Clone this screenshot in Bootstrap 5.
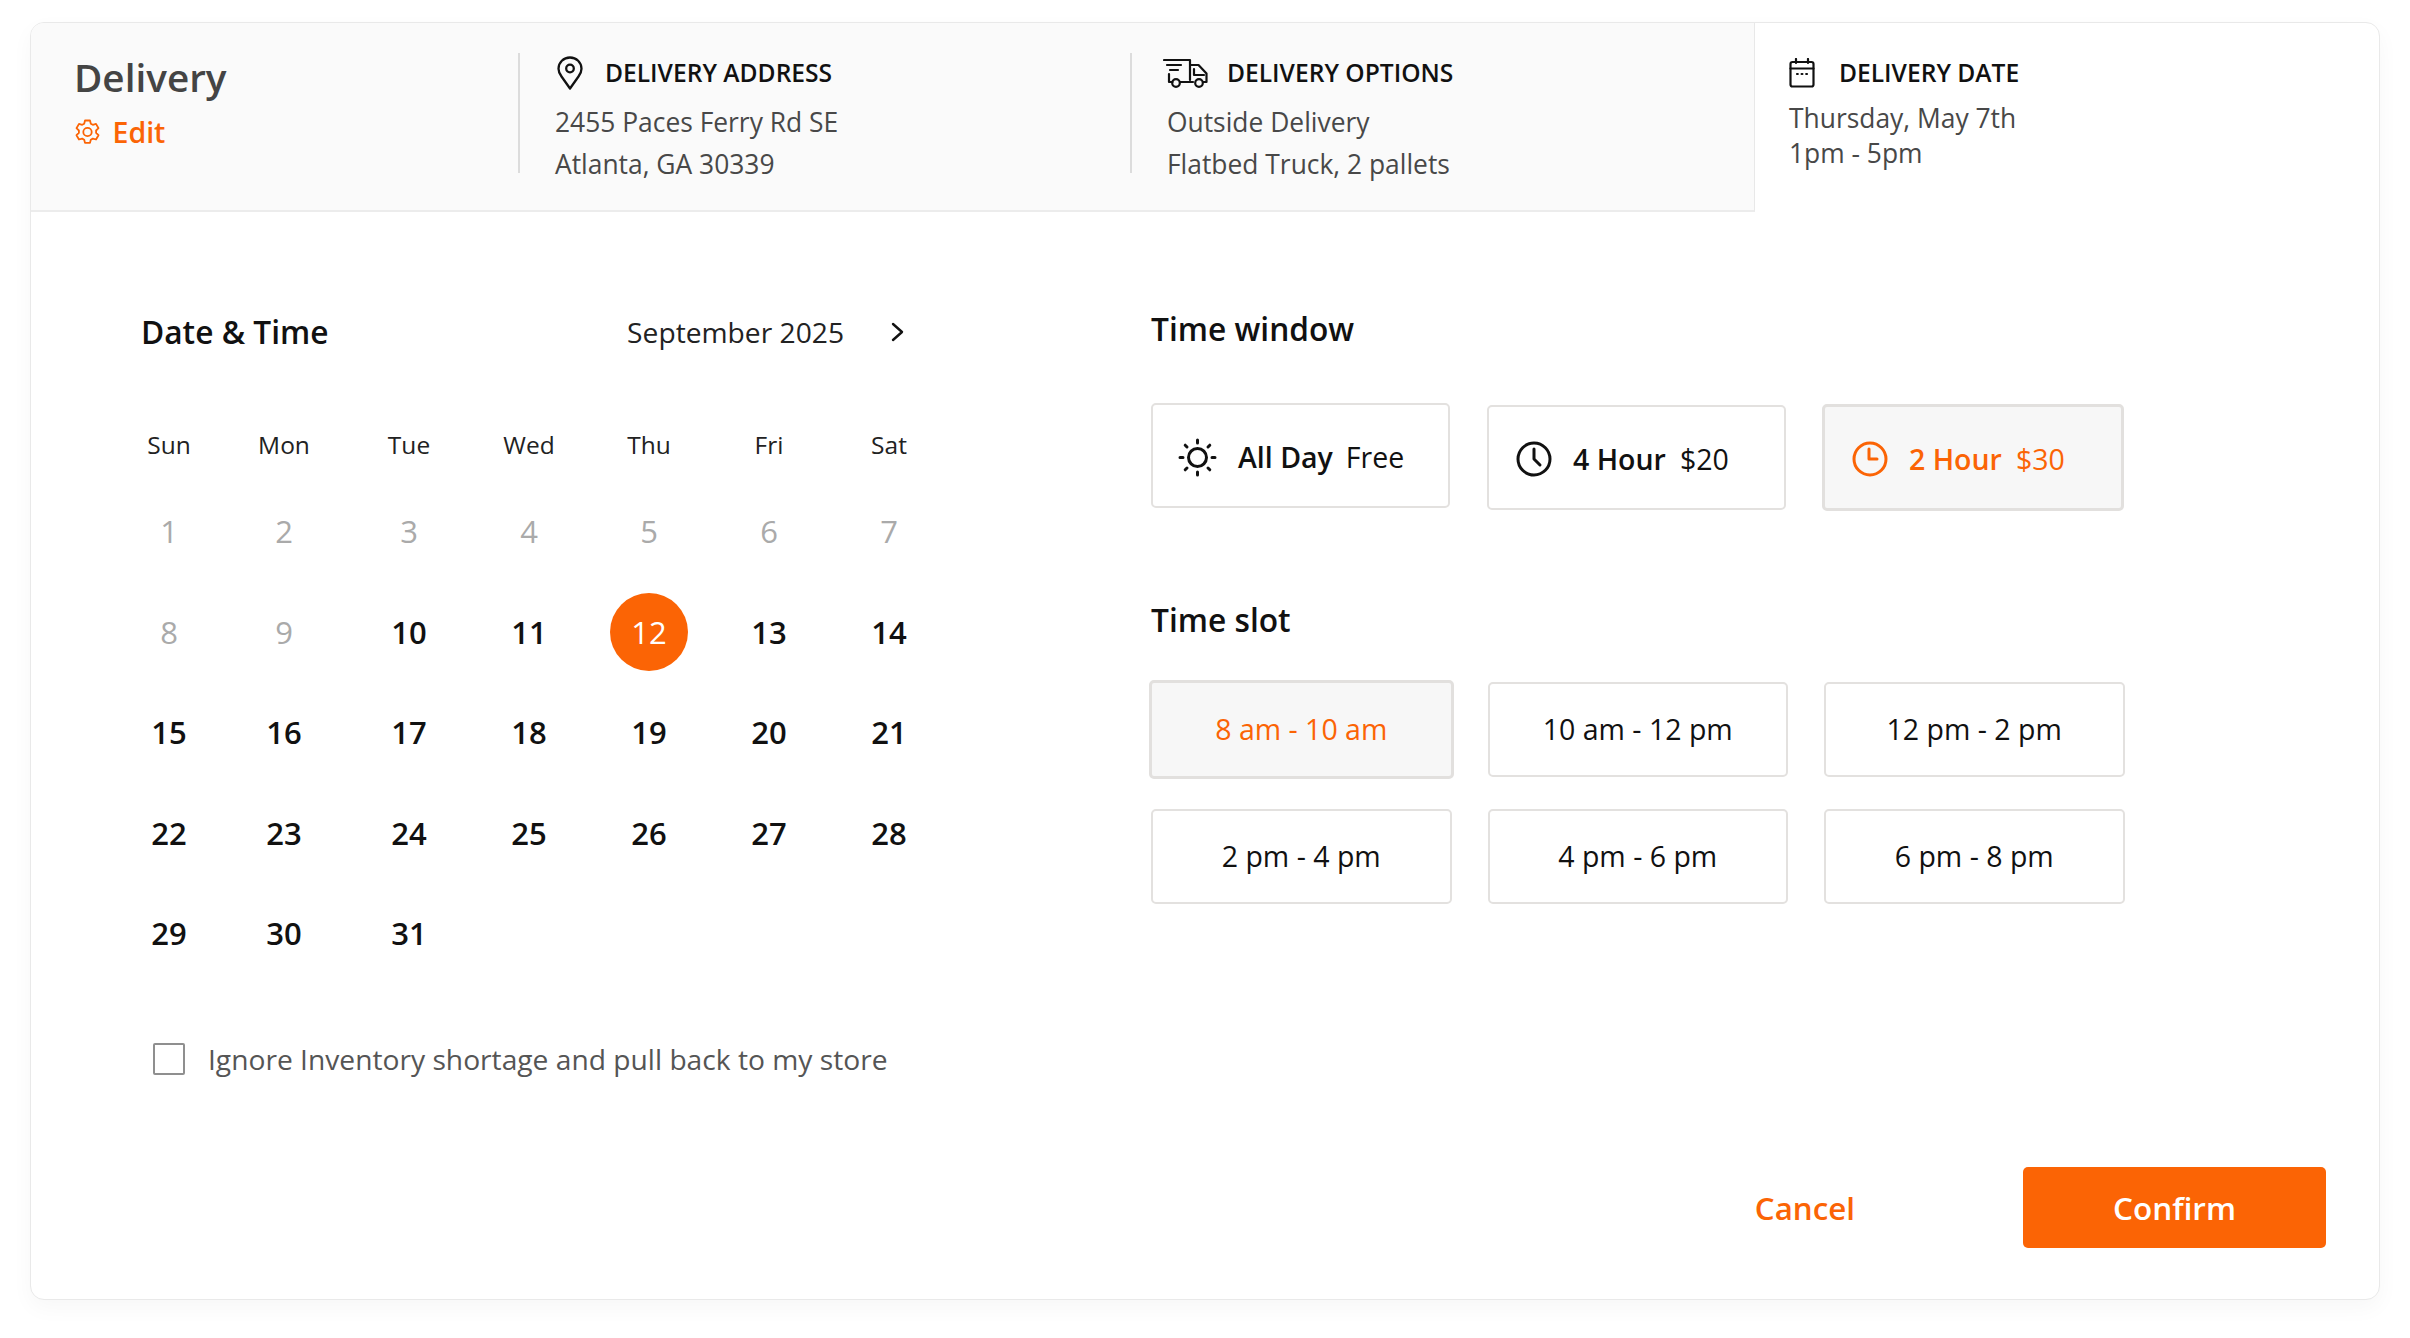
<!DOCTYPE html>
<html lang="en">
<head>
<meta charset="utf-8">
<title>Delivery</title>
<link href="https://cdn.jsdelivr.net/npm/bootstrap@5.3.0/dist/css/bootstrap.min.css" rel="stylesheet">
<style>
:root{--brand:#fb6405;--line:#e3e1df;}
html,body{background:#fff;margin:0;height:1338px;overflow:hidden;}
body{font-family:"Open Sans","Noto Sans",sans-serif;color:#000;padding:22px 30px 0;}
.sheet{width:2350px;height:1278px;border:1px solid #e9e9e9;border-radius:14px;background:#fff;box-shadow:0 8px 22px rgba(0,0,0,.035);overflow:hidden;}
.topband{height:189px;}
.topgrey{width:1724px;background:#fafafa;border-right:1px solid #e8e8e8;border-bottom:2px solid #ececec;}
.ttl-block{width:487px;padding:29px 0 0 43px;}
.ttl{font-size:38.7px;font-weight:600;color:#444;line-height:50px;}
.edit{font-size:28.5px;font-weight:600;color:var(--brand);line-height:36px;margin:12px 0 0 1px;gap:12.500px;}
.info{margin-top:30px;height:120px;}
.info-a{width:612px;padding-left:34px;border-left:2px solid #dcdcdc;}
.info-b{padding-left:31px;border-left:2px solid #dcdcdc;}
.info-c{padding:33px 0 0 34px;}
.hd{font-size:24.6px;font-weight:600;line-height:38px;gap:24px;color:#111;margin-top:1px;}
.info-a .hd{margin-left:3px;gap:22px;}
.info-b .hd{gap:18px;}
.tx{font-size:26.4px;line-height:42px;color:#484848;margin-top:9px;}
.info-a .tx{margin-left:1px;}
.info-b .tx{margin-left:4px;}
.info-c .hd{margin-top:-2px;}
.tx2{font-size:26.4px;line-height:35px;color:#484848;margin-top:9px;}
.main{height:1088px;}
.leftcol{width:1120px;padding:0 0 0 88px;}
.cal-head{width:778px;padding-left:22px;height:40px;margin-top:100px;}
.sub{font-size:31.7px;font-weight:600;line-height:40px;color:#111;}
.month{font-size:28.2px;line-height:40px;color:#222;}
.mgroup{gap:46px;margin-left:auto;margin-right:-8px;}
.cal-grid{display:grid;grid-template-columns:100px 130px repeat(5,120px);grid-auto-rows:100.5px;text-align:center;margin-top:0;padding-top:19px;}
.dow{font-size:24.5px;color:#222;line-height:34px;}
.dowrow{display:grid;grid-template-columns:100px 130px repeat(5,120px);text-align:center;margin-top:76px;}
.dy{font-size:31px;font-weight:600;line-height:100.5px;color:#111;display:flex;align-items:center;justify-content:center;}
.dy.off{font-weight:500;color:#aaa;}
.dy span{display:flex;align-items:center;justify-content:center;width:78px;height:78px;border-radius:50%;background:var(--brand);color:#fff;font-weight:400;}
.chk{margin-top:55px;gap:23px;padding-left:34px;font-size:28.2px;line-height:40px;color:#555;}
.chk .boxi{width:32px;height:32px;border:2px solid #8f8f8f;border-radius:2px;margin:0;background:#fff;}
.rightcol{width:1000px;}
.sub.first{margin-top:97px;}
.tw{display:flex;margin-top:54px;height:108px;}
.pick{border:2px solid var(--line);border-radius:5px;background:#fff;color:#111;display:flex;align-items:center;font-size:28.5px;}
.pick b{font-weight:600;}
.pw{width:299px;height:105px;padding:3px 0 0 25px;}
.pw svg{flex:none;}
.pw .lab{margin-left:21px;}
.pw .pr{margin-left:13px;}
.pw2{margin:2px 0 0 37px;padding-left:27px;}
.pw2 .pr{margin-left:14px;}
.pw3{margin:1px 0 0 36px;width:302px;height:107px;padding-left:27px;}
.pw3 .pr{margin-left:14px;}
.sel{background:#f7f7f7;color:var(--brand);border:3px solid #e2e0de;}
.sub.second{margin-top:89px;}
.slots{display:grid;grid-template-columns:repeat(3,300.5px);column-gap:36px;row-gap:32px;margin-top:42px;width:980px;}
.pick.sl{height:95px;justify-content:center;padding:0;}
.pick.sl.sel{margin:-2px;height:99px;}
.foot{position:absolute;right:53px;top:1144px;gap:168px;}
.cancel{font-size:31.3px;font-weight:600;color:var(--brand);background:none;border:0;padding:0;line-height:42px;}
.confirm{width:303px;height:81px;background:var(--brand);border:0;border-radius:5px;color:#fff;font-size:31.5px;font-weight:600;}
.confirm:hover,.confirm:active{background:var(--brand)!important;color:#fff!important;}
</style>
</head>
<body>
<div class="sheet position-relative">
  <div class="topband d-flex">
    <div class="topgrey d-flex">
      <div class="ttl-block">
        <div class="ttl">Delivery</div>
        <div class="edit d-flex align-items-center">
          <svg width="25" height="26" viewBox="0 0 25 26" fill="none" stroke="#fb6405" stroke-width="1.8" stroke-linejoin="round"><path d="M10 1.500h5l.8 3.200 2 1.100 3.200-.9 2.500 4.300-2.400 2.300v2.400l2.400 2.300-2.500 4.300-3.200-.9-2 1.100-.8 3.200h-5l-.8-3.200-2-1.100-3.200.9-2.500-4.300 2.400-2.300v-2.400L1.500 9.200 4 4.900l3.200.9 2-1.100z"/><circle cx="12.500" cy="13" r="4.200"/></svg>
          <span>Edit</span>
        </div>
      </div>
      <div class="info info-a">
        <div class="hd d-flex align-items-center">
          <svg width="26" height="34" viewBox="0 0 26 34" fill="none" stroke="#111" stroke-width="2.300" stroke-linejoin="round"><path d="M13 32.500 4.500 20.500C2.500 17.800 1.500 15.500 1.500 12.800 1.500 6.400 6.600 1.500 13 1.500s11.500 4.900 11.500 11.300c0 2.700-1 5-3 7.700z"/><circle cx="13" cy="12.500" r="3.800"/></svg>
          <span>DELIVERY ADDRESS</span>
        </div>
        <div class="tx">2455 Paces Ferry Rd SE<br>Atlanta, GA 30339</div>
      </div>
      <div class="info info-b">
        <div class="hd d-flex align-items-center">
          <svg width="46" height="30" viewBox="0 0 46 30" fill="none" stroke="#111" stroke-width="2.200" stroke-linejoin="round" stroke-linecap="round"><path d="M1 2h26v20M4 7h14M7 12h8M6 16v8h3.500M17 24h13M27 7h8.500l8 8.500V24h-3.500M31 11v6h10"/><circle cx="13" cy="25" r="3.800"/><circle cx="36" cy="25" r="3.800"/></svg>
          <span>DELIVERY OPTIONS</span>
        </div>
        <div class="tx">Outside Delivery<br>Flatbed Truck, 2 pallets</div>
      </div>
    </div>
    <div class="info-c">
      <div class="hd d-flex align-items-center">
        <svg width="26" height="30" viewBox="0 0 26 30" fill="none" stroke="#111" stroke-width="2.200" stroke-linecap="round"><rect x="1.500" y="4" width="23" height="24.500" rx="2"/><path d="M1.500 10.500h23M7 1v4M19 1v4M8 16h.8M12.600 16h.8M17.200 16h.8"/></svg>
        <span>DELIVERY DATE</span>
      </div>
      <div class="tx2">Thursday, May 7th<br>1pm - 5pm</div>
    </div>
  </div>
  <div class="main d-flex">
    <div class="leftcol">
      <div class="cal-head d-flex align-items-center">
        <div class="sub">Date &amp; Time</div>
        <div class="mgroup d-flex align-items-center">
          <div class="month">September 2025</div>
          <svg width="15" height="20" viewBox="0 0 15 20" fill="none" stroke="#111" stroke-width="2.400" stroke-linecap="round" stroke-linejoin="round"><path d="M3 2l9 8-9 8"/></svg>
        </div>
      </div>
      <div class="dowrow">
        <div class="dow">Sun</div><div class="dow">Mon</div><div class="dow">Tue</div><div class="dow">Wed</div><div class="dow">Thu</div><div class="dow">Fri</div><div class="dow">Sat</div>
      </div>
      <div class="cal-grid">
        <div class="dy off">1</div><div class="dy off">2</div><div class="dy off">3</div><div class="dy off">4</div><div class="dy off">5</div><div class="dy off">6</div><div class="dy off">7</div>
        <div class="dy off">8</div><div class="dy off">9</div><div class="dy">10</div><div class="dy">11</div><div class="dy"><span>12</span></div><div class="dy">13</div><div class="dy">14</div>
        <div class="dy">15</div><div class="dy">16</div><div class="dy">17</div><div class="dy">18</div><div class="dy">19</div><div class="dy">20</div><div class="dy">21</div>
        <div class="dy">22</div><div class="dy">23</div><div class="dy">24</div><div class="dy">25</div><div class="dy">26</div><div class="dy">27</div><div class="dy">28</div>
        <div class="dy">29</div><div class="dy">30</div><div class="dy">31</div>
      </div>
      <div class="chk d-flex align-items-center">
        <input class="boxi form-check-input" type="checkbox" id="pull">
        <label for="pull">Ignore Inventory shortage and pull back to my store</label>
      </div>
    </div>
    <div class="rightcol">
      <div class="sub first">Time window</div>
      <div class="tw">
        <div class="pick pw">
          <svg width="39" height="39" viewBox="0 0 39 39" fill="none" stroke="#111" stroke-width="3" stroke-linecap="round"><circle cx="19.500" cy="19.500" r="9"/><path d="M19.500 2v3M19.500 34v3M2 19.500h3M34 19.500h3M7.200 7.200l1.800 1.800M30 30l1.800 1.800M7.200 31.800l1.800-1.800M30 9l1.800-1.800"/></svg>
          <span class="lab"><b>All Day</b></span><span class="pr">Free</span>
        </div>
        <div class="pick pw pw2">
          <svg width="36" height="36" viewBox="0 0 36 36" fill="none" stroke="#111" stroke-width="3" stroke-linecap="round" stroke-linejoin="round"><circle cx="18" cy="18" r="16"/><path d="M18 8v10l6 6"/></svg>
          <span class="lab"><b>4 Hour</b></span><span class="pr">$20</span>
        </div>
        <div class="pick pw pw3 sel">
          <svg width="36" height="36" viewBox="0 0 36 36" fill="none" stroke="#fb6405" stroke-width="3" stroke-linecap="round" stroke-linejoin="round"><circle cx="18" cy="18" r="16"/><path d="M17 8v10h8"/></svg>
          <span class="lab"><b>2 Hour</b></span><span class="pr">$30</span>
        </div>
      </div>
      <div class="sub second">Time slot</div>
      <div class="slots">
        <div class="pick sl sel">8 am - 10 am</div>
        <div class="pick sl">10 am - 12 pm</div>
        <div class="pick sl">12 pm - 2 pm</div>
        <div class="pick sl">2 pm - 4 pm</div>
        <div class="pick sl">4 pm - 6 pm</div>
        <div class="pick sl">6 pm - 8 pm</div>
      </div>
    </div>
  </div>
  <div class="foot d-flex align-items-center">
    <button type="button" class="cancel btn">Cancel</button>
    <button type="button" class="confirm btn">Confirm</button>
  </div>
</div>
<script src="https://cdn.jsdelivr.net/npm/bootstrap@5.3.0/dist/js/bootstrap.bundle.min.js"></script>
</body>
</html>
